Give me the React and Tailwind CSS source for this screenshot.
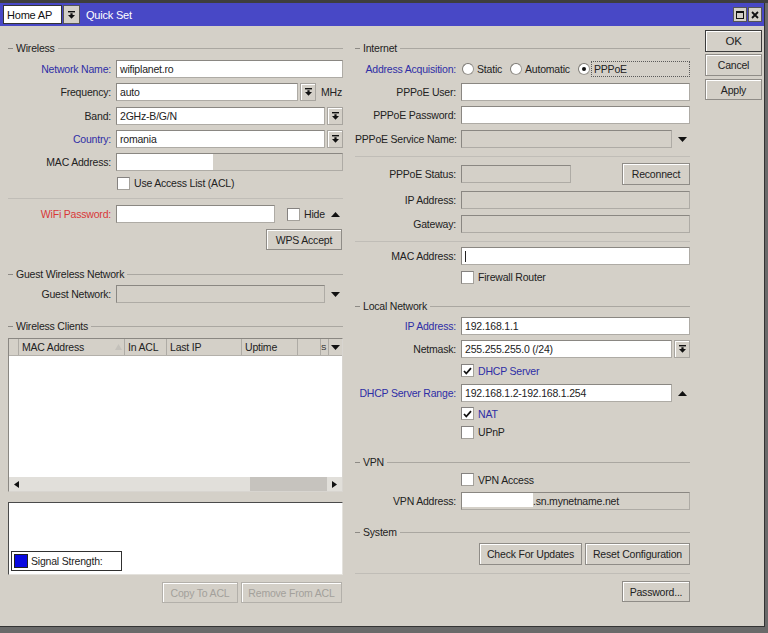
import React from 'react';

const BLUE = 'text-[#2e2ea6]';
const RED = 'text-[#d83838]';
const T = 'pt-[2px]';

function Drop() {
  return (
    <svg width="7" height="8" viewBox="0 0 7 8" className="block">
      <rect x="0" y="0" width="7" height="1.4" fill="#111" />
      <path d="M2.4 2.3h2.2v1.8H7L3.5 7.8 0 4.1h2.4z" fill="#111" />
    </svg>
  );
}

function DropBtn() {
  return (
    <div className="w-[16px] h-[18px] shrink-0 flex items-center justify-center bg-[#d4d0c8] border border-[#a8a59f] shadow-[inset_1px_1px_0_#fff]">
      <Drop />
    </div>
  );
}

function Tri({ up }) {
  return (
    <div className="w-[16px] shrink-0 flex items-center justify-center">
      <svg width="9" height="5" viewBox="0 0 9 5" className="block">
        <path d={up ? 'M0 5h9L4.5 0z' : 'M0 0h9L4.5 5z'} fill="#111" />
      </svg>
    </div>
  );
}

function Field({ children, disabled, className = '' }) {
  return (
    <div
      className={`h-[18px] pt-[2px] flex items-center overflow-hidden whitespace-nowrap border border-[#aeaba5] border-t-[#8a8782] border-l-[#8a8782] ${
        disabled ? 'bg-[#d4d0c8]' : 'bg-white'
      } ${className}`}
    >
      {children}
    </div>
  );
}

function Check({ checked }) {
  return (
    <div className="w-[13px] h-[13px] shrink-0 bg-white border border-[#a4a19b] border-t-[#858280] border-l-[#858280] flex items-center justify-center">
      {checked && (
        <svg width="9" height="8" viewBox="0 0 9 8" className="block">
          <path d="M1 4l2.3 2.5L8 1.2" stroke="#111" strokeWidth="1.8" fill="none" />
        </svg>
      )}
    </div>
  );
}

function Radio({ on }) {
  return (
    <div className="w-[12px] h-[12px] shrink-0 rounded-full bg-white border border-[#9c9993] border-t-[#7c7974] border-l-[#7c7974] flex items-center justify-center">
      {on && <div className="w-[4px] h-[4px] rounded-full bg-[#111]" />}
    </div>
  );
}

function Btn({ children, className = '', disabled, strong }) {
  return (
    <div
      className={`flex items-center justify-center pt-[2px] bg-[#d4d0c8] border whitespace-nowrap shadow-[inset_1px_1px_0_#fff] ${
        strong ? 'border-[#3c3c3c]' : disabled ? 'border-[#b3b0aa]' : 'border-[#8f8c87]'
      } ${disabled ? 'text-[#a3a09b]' : 'text-[#222]'} ${className}`}
    >
      {children}
    </div>
  );
}

function Group({ title }) {
  return (
    <div className="flex items-center h-[16px]">
      <div className="w-[5px] h-px bg-[#8d8a85]" />
      <span className={`px-[3px] text-[#222] ${T}`}>{title}</span>
      <div className="flex-1 h-px bg-[#aaa7a1]" />
    </div>
  );
}

function Sep({ h }) {
  return (
    <div className={`flex items-center ${h}`}>
      <div className="flex-1 h-px bg-[#c0bdb7]" />
    </div>
  );
}

function Row({ label, color = 'text-[#222]', lw = 'w-[108px]', h, children }) {
  return (
    <div className={`flex items-center ${h}`}>
      <div className={`${lw} shrink-0 pr-[5px] text-right whitespace-nowrap ${T} ${color}`}>{label}</div>
      <div className="flex-1 flex items-center min-w-0">{children}</div>
    </div>
  );
}

function Label({ children, className = '' }) {
  return <span className={`ml-[4px] whitespace-nowrap ${T} ${className}`}>{children}</span>;
}

function Arrow({ right }) {
  return (
    <svg width="5" height="7" viewBox="0 0 5 7" className="block">
      <path d={right ? 'M0 0l5 3.5L0 7z' : 'M5 0L0 3.5 5 7z'} fill="#111" />
    </svg>
  );
}

function Clients() {
  const cols = [
    { w: 'w-[10px]', t: '' },
    { w: 'w-[106px]', t: 'MAC Address', sort: true },
    { w: 'w-[42px]', t: 'In ACL' },
    { w: 'w-[75px]', t: 'Last IP' },
    { w: 'w-[56px]', t: 'Uptime' },
    { w: 'w-[23px]', t: '' },
  ];
  return (
    <div className="h-[154px] flex flex-col border border-[#8a8782] border-r-[#d8d5d0] border-b-[#d8d5d0]">
      <div className="h-[17px] flex bg-[#d4d0c8] border-b border-[#b3b0aa]">
        {cols.map((c, i) => (
          <div key={i} className={`${c.w} shrink-0 flex items-center justify-between overflow-hidden border-r border-[#aeaba5] pl-[3px] whitespace-nowrap`}>
            <span className={T}>{c.t}</span>
            {c.sort && (
              <svg width="7" height="6" viewBox="0 0 7 6" className="block mr-[2px]">
                <path d="M0 6h7L3.5 0z" fill="#c4c1bb" />
              </svg>
            )}
          </div>
        ))}
        <div className="w-[8px] shrink-0 flex items-center border-r border-[#aeaba5] text-[8px] tracking-[-0.5px]">
          <span className={T}>S</span>
        </div>
        <div className="flex-1 flex items-center justify-center">
          <svg width="9" height="5" viewBox="0 0 9 5" className="block">
            <path d="M0 0h9L4.5 5z" fill="#111" />
          </svg>
        </div>
      </div>
      <div className="flex-1 bg-white" />
      <div className="h-[14px] flex bg-[#e1dfda]">
        <div className="w-[14px] flex items-center justify-center">
          <Arrow />
        </div>
        <div className="w-[227px]" />
        <div className="w-[77px] bg-[#c6c3be]" />
        <div className="flex-1 flex items-center justify-center">
          <Arrow right />
        </div>
      </div>
    </div>
  );
}

export default function App() {
  return (
    <div className="w-[768px] h-[633px] bg-[#6a6a6a] overflow-hidden font-['Liberation_Sans',Arial,sans-serif] text-[10.5px] tracking-[-0.2px] text-[#222]">
      <div className="h-[3px] bg-[#3e3e3e]" />
      <div className="w-[765px] h-[624px] bg-[#d4d0c8] border-r border-b border-[#333] flex flex-col">
        {/* title bar */}
        <div className="h-[23px] shrink-0 bg-[#4848c6] flex items-center">
          <div className="ml-[3px] w-[59px] h-[19px] bg-white border border-[#333] flex items-center pl-[3px] pt-[2px] text-[11px] text-[#111]">
            Home AP
          </div>
          <div className="ml-[1px] w-[17px] h-[19px] bg-[#d4d0c8] border border-[#555] flex items-center justify-center">
            <Drop />
          </div>
          <span className="ml-[6px] pt-[2px] text-white text-[11px]">Quick Set</span>
          <div className="ml-auto mr-[2px] flex gap-[1px]">
            <div className="w-[14px] h-[15px] bg-[#d4d0c8] border border-[#555] flex items-center justify-center">
              <div className="w-[8px] h-[8px] border border-[#111] border-t-2" />
            </div>
            <div className="w-[14px] h-[15px] bg-[#d4d0c8] border border-[#555] flex items-center justify-center">
              <svg width="8" height="8" viewBox="0 0 8 8" className="block">
                <path d="M1 1l6 6M7 1L1 7" stroke="#111" strokeWidth="1.8" />
              </svg>
            </div>
          </div>
        </div>

        <div className="flex flex-1">
          {/* left column */}
          <div className="w-[345px] shrink-0 pl-2 pr-[2px] flex flex-col">
            <div className="h-[14px]" />
            <Group title="Wireless" />
            <div className="h-px" />
            <Row h="h-[23px]" label="Network Name:" color={BLUE}>
              <Field className="flex-1 pl-[3px]">wifiplanet.ro</Field>
            </Row>
            <Row h="h-[24px]" label="Frequency:">
              <Field className="w-[182px] pl-[3px]">auto</Field>
              <div className="ml-[2px]"><DropBtn /></div>
              <span className={`ml-[5px] ${T}`}>MHz</span>
            </Row>
            <Row h="h-[23px]" label="Band:">
              <Field className="flex-1 pl-[3px]">2GHz-B/G/N</Field>
              <div className="ml-[2px]"><DropBtn /></div>
            </Row>
            <Row h="h-[24px]" label="Country:" color={BLUE}>
              <Field className="flex-1 pl-[3px]">romania</Field>
              <div className="ml-[2px]"><DropBtn /></div>
            </Row>
            <Row h="h-[22px]" label="MAC Address:">
              <Field disabled className="flex-1 !pt-0">
                <div className="w-[96px] h-full bg-white" />
              </Field>
            </Row>
            <Row h="h-[20px]" label="">
              <div className="ml-[1px]"><Check /></div>
              <Label>Use Access List (ACL)</Label>
            </Row>
            <Sep h="h-[10px]" />
            <Row h="h-[22px]" label="WiFi Password:" color={RED}>
              <Field className="w-[159px]" />
              <div className="ml-[12px]"><Check /></div>
              <Label>Hide</Label>
              <div className="ml-auto"><Tri up /></div>
            </Row>
            <div className="flex justify-end mt-[4px] pr-px">
              <Btn className="w-[76px] h-[21px]">WPS Accept</Btn>
            </div>
            <div className="h-[16px]" />
            <Group title="Guest Wireless Network" />
            <Row h="h-[24px]" label="Guest Network:">
              <Field disabled className="flex-1" />
              <div className="ml-[2px]"><Tri /></div>
            </Row>
            <div className="h-[12px]" />
            <Group title="Wireless Clients" />
            <div className="h-[4px]" />
            <Clients />
            <div className="h-[10px]" />
            <div className="h-[73px] bg-white border border-[#4a4a4a] border-r-[#e4e2dd] border-b-[#e4e2dd] flex flex-col justify-end pl-[2px] pb-[3px]">
              <div className="w-[111px] h-[20px] border border-[#303030] bg-white flex items-center pl-[2px]">
                <div className="w-[14px] h-[14px] bg-[#0a0ae0] border border-[#222]" />
                <span className={`ml-[3px] ${T}`}>Signal Strength:</span>
              </div>
            </div>
            <div className="h-[7px]" />
            <div className="flex justify-end gap-[3px] pr-px">
              <Btn disabled className="w-[76px] h-[21px]">Copy To ACL</Btn>
              <Btn disabled className="w-[101px] h-[21px]">Remove From ACL</Btn>
            </div>
          </div>

          {/* right column */}
          <div className="w-[355px] shrink-0 pl-[10px] pr-[10px] flex flex-col">
            <div className="h-[14px]" />
            <Group title="Internet" />
            <div className="h-px" />
            <Row h="h-[23px]" lw="w-[106px]" label="Address Acquisition:" color={BLUE}>
              <div className="w-[49px] flex items-center pl-[1px]">
                <Radio />
                <span className={`ml-[3px] ${T}`}>Static</span>
              </div>
              <div className="w-[68px] flex items-center">
                <Radio />
                <span className={`ml-[3px] ${T}`}>Automatic</span>
              </div>
              <Radio on />
              <div className="flex-1 ml-[1px] h-[16px] pt-[2px] border border-dotted border-[#5a5a5a] flex items-center pl-[2px]">
                PPPoE
              </div>
            </Row>
            <Row h="h-[23px]" lw="w-[106px]" label="PPPoE User:">
              <Field className="flex-1" />
            </Row>
            <Row h="h-[24px]" lw="w-[106px]" label="PPPoE Password:">
              <Field className="flex-1" />
            </Row>
            <Row h="h-[24px]" lw="w-[106px]" label="PPPoE Service Name:">
              <Field disabled className="w-[211px]" />
              <div className="ml-[2px]"><Tri /></div>
            </Row>
            <Sep h="h-[10px]" />
            <Row h="h-[26px]" lw="w-[106px]" label="PPPoE Status:">
              <Field disabled className="w-[110px]" />
              <div className="ml-auto">
                <Btn className="w-[68px] h-[22px]">Reconnect</Btn>
              </div>
            </Row>
            <Row h="h-[25px]" lw="w-[106px]" label="IP Address:">
              <Field disabled className="flex-1" />
            </Row>
            <Row h="h-[24px]" lw="w-[106px]" label="Gateway:">
              <Field disabled className="flex-1" />
            </Row>
            <Sep h="h-[10px]" />
            <Row h="h-[20px]" lw="w-[106px]" label="MAC Address:">
              <Field className="flex-1 pl-[3px] !pt-0">
                <div className="w-px h-[11px] bg-[#222]" />
              </Field>
            </Row>
            <Row h="h-[22px]" lw="w-[106px]" label="">
              <Check />
              <Label>Firewall Router</Label>
            </Row>
            <div className="h-[10px]" />
            <Group title="Local Network" />
            <Row h="h-[24px]" lw="w-[106px]" label="IP Address:" color={BLUE}>
              <Field className="flex-1 pl-[3px]">192.168.1.1</Field>
            </Row>
            <Row h="h-[22px]" lw="w-[106px]" label="Netmask:">
              <Field className="w-[211px] pl-[3px]">255.255.255.0 (/24)</Field>
              <div className="ml-[2px]"><DropBtn /></div>
            </Row>
            <Row h="h-[21px]" lw="w-[106px]" label="">
              <Check checked />
              <Label className={BLUE}>DHCP Server</Label>
            </Row>
            <Row h="h-[24px]" lw="w-[106px]" label="DHCP Server Range:" color={BLUE}>
              <Field className="w-[211px] pl-[3px]">192.168.1.2-192.168.1.254</Field>
              <div className="ml-[2px]"><Tri up /></div>
            </Row>
            <Row h="h-[17px]" lw="w-[106px]" label="">
              <Check checked />
              <Label className={BLUE}>NAT</Label>
            </Row>
            <Row h="h-[20px]" lw="w-[106px]" label="">
              <Check />
              <Label>UPnP</Label>
            </Row>
            <div className="h-[12px]" />
            <Group title="VPN" />
            <Row h="h-[19px]" lw="w-[106px]" label="">
              <Check />
              <Label>VPN Access</Label>
            </Row>
            <Row h="h-[24px]" lw="w-[106px]" label="VPN Address:">
              <Field disabled className="flex-1">
                <div className="w-[71px] h-full bg-white -mt-[2px] self-stretch" />
                <span>.sn.mynetname.net</span>
              </Field>
            </Row>
            <div className="h-[11px]" />
            <Group title="System" />
            <div className="h-[3px]" />
            <div className="flex justify-end gap-[3px]">
              <Btn className="w-[103px] h-[22px]">Check For Updates</Btn>
              <Btn className="w-[105px] h-[22px]">Reset Configuration</Btn>
            </div>
            <Sep h="h-[16px]" />
            <div className="flex justify-end">
              <Btn className="w-[68px] h-[21px]">Password...</Btn>
            </div>
          </div>

          {/* dialog buttons */}
          <div className="flex-1 pl-[5px] pr-[2px] pt-[4px] flex flex-col gap-[2px]">
            <Btn strong className="h-[22px] text-[11.5px]">OK</Btn>
            <Btn className="h-[22px]">Cancel</Btn>
            <Btn className="h-[21px] mt-px">Apply</Btn>
          </div>
        </div>
      </div>
    </div>
  );
}
